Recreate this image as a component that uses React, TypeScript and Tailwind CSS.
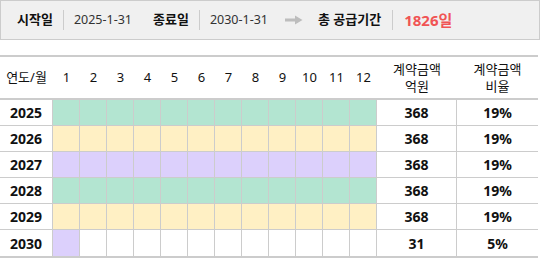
const font = { fontFamily: '"Noto Sans", "Noto Sans CJK KR", sans-serif' }

const rows = [
  { year: 2025, fill: 12, color: 'bg-[#b3e5d1]', amount: '368', ratio: '19%' },
  { year: 2026, fill: 12, color: 'bg-[#fff0c4]', amount: '368', ratio: '19%' },
  { year: 2027, fill: 12, color: 'bg-[#dcd0fc]', amount: '368', ratio: '19%' },
  { year: 2028, fill: 12, color: 'bg-[#b3e5d1]', amount: '368', ratio: '19%' },
  { year: 2029, fill: 12, color: 'bg-[#fff0c4]', amount: '368', ratio: '19%' },
  { year: 2030, fill: 1, color: 'bg-[#dcd0fc]', amount: '31', ratio: '5%' },
]

const months = [1, 2, 3, 4, 5, 6, 7, 8, 9, 10, 11, 12]

function Divider() {
  return <div className="w-px h-[20px] bg-[#cccccc]" />
}

function Arrow() {
  return (
    <svg width="18" height="10" viewBox="0 0 18 10" className="ml-[17px]">
      <path d="M0 5 H13" stroke="#bdbdbd" strokeWidth="3" />
      <path d="M10 0.5 L17.5 5 L10 9.5 Z" fill="#bdbdbd" />
    </svg>
  )
}

export default function App() {
  return (
    <div className="w-[550px] h-[264px] bg-white text-[#111] text-[13px]" style={font}>
      <div className="w-[540px] h-[40px] border border-[#cccccc] bg-[#f0f0f0] flex items-center pl-[16px]">
        <span className="font-bold">시작일</span>
        <div className="mx-[10px]"><Divider /></div>
        <span className="text-[#333] text-[12.5px]">2025-1-31</span>
        <span className="font-bold ml-[21px]">종료일</span>
        <div className="mx-[10px]"><Divider /></div>
        <span className="text-[#333] text-[12.5px]">2030-1-31</span>
        <Arrow />
        <span className="font-bold ml-[15px]">총 공급기간</span>
        <div className="mx-[11px]"><Divider /></div>
        <span className="font-bold text-[15px] text-[#f05454]">1826일</span>
      </div>

      <div className="mt-[15px] w-[538px] border-t-2 border-b-2 border-[#cccccc]">
        <div className="flex items-center h-[43px] border-b-2 border-[#cccccc]">
          <div className="w-[53px] text-center">연도/월</div>
          {months.map((m) => (
            <div key={m} className="w-[27px] text-center">{m}</div>
          ))}
          <div className="w-[80px] text-center leading-[17px]">계약금액<br />억원</div>
          <div className="w-[81px] text-center leading-[17px]">계약금액<br />비율</div>
        </div>
        {rows.map((r, i) => (
          <div
            key={r.year}
            className={`flex h-[26px] font-bold text-[14px] ${i < rows.length - 1 ? 'border-b border-[#cccccc]' : ''}`}
          >
            <div className="w-[53px] flex items-center justify-center border-r border-[#cccccc]">{r.year}</div>
            {months.map((m) => (
              <div
                key={m}
                className={`w-[27px] border-r border-[#cccccc] ${m <= r.fill ? r.color : 'bg-white'}`}
              />
            ))}
            <div className="w-[80px] flex items-center justify-center border-r border-[#cccccc]">{r.amount}</div>
            <div className="w-[81px] flex items-center justify-center">{r.ratio}</div>
          </div>
        ))}
      </div>
    </div>
  )
}
